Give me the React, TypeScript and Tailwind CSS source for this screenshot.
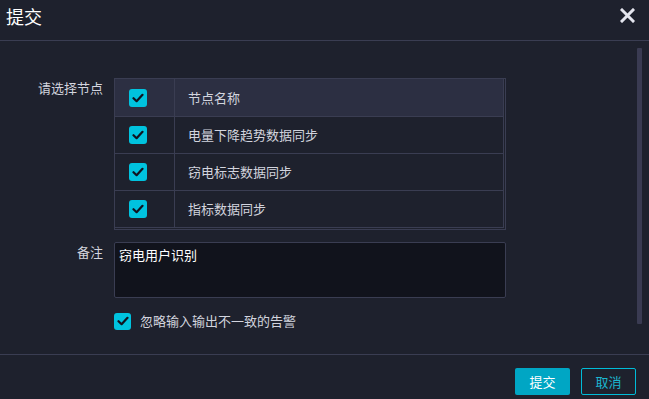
import React from "react";

const font = { fontFamily: '"Noto Sans CJK SC", "Noto Sans", sans-serif' };

function Check({ size = 18 }: { size?: number }) {
  return (
    <div
      className="flex items-center justify-center rounded-[3px] bg-[#00c3df]"
      style={{ width: size, height: size }}
    >
      <svg width="12" height="10" viewBox="0 0 12 10" fill="none">
        <path d="M1.5 5.2 L4.6 8.2 L10.5 1.8" stroke="#111320" strokeWidth="2.2" strokeLinecap="round" strokeLinejoin="round" />
      </svg>
    </div>
  );
}

const rows = ["电量下降趋势数据同步", "窃电标志数据同步", "指标数据同步"];

export default function App() {
  return (
    <div className="flex h-[399px] w-[649px] flex-col overflow-hidden bg-[#1e212d] text-[13px] text-[#d2d4de]" style={font}>
      <div className="flex h-[41px] items-start justify-between border-b border-[#3a3d52]">
        <div className="pl-[6px] pt-[4px] text-[18px] leading-[24px] text-white">提交</div>
        <svg className="mr-[14px] mt-[8px]" width="15" height="15" viewBox="0 0 15 15">
          <path d="M2 2 L13 13 M13 2 L2 13" stroke="#e4e5ee" strokeWidth="3" strokeLinecap="square" />
        </svg>
      </div>
      <div className="flex flex-1">
        <div className="flex flex-1 flex-col pt-[37px]">
          <div className="flex gap-[11px]">
            <div className="w-[103px] pt-[1px] text-right leading-[18px]">请选择节点</div>
            <div className="w-[392px] border border-[#3a3d52] pb-[1px] pr-[1px]">
              <div className="border-b border-r border-[#3a3d52]">
                <div className="flex h-[38px] border-b border-[#3a3d52] bg-[#2c2f42]">
                  <div className="flex w-[60px] items-center border-r border-[#3a3d52] pl-[14px]">
                    <Check />
                  </div>
                  <div className="flex items-center pl-[13px]">节点名称</div>
                </div>
                {rows.map((r, i) => (
                  <div
                    key={r}
                    className={i < rows.length - 1 ? "flex h-[37px] border-b border-[#3a3d52]" : "flex h-[36px]"}
                  >
                    <div className="flex w-[60px] items-center border-r border-[#3a3d52] pl-[14px]">
                      <Check />
                    </div>
                    <div className="flex items-center pl-[13px]">{r}</div>
                  </div>
                ))}
              </div>
            </div>
          </div>
          <div className="mt-[12px] flex gap-[11px]">
            <div className="w-[103px] pt-[1px] text-right leading-[18px]">备注</div>
            <div className="h-[56px] w-[392px] rounded-[2px] border border-[#3a3d52] bg-[#11131c] px-[4px] pt-[3px] leading-[18px] text-white">
              窃电用户识别
            </div>
          </div>
          <div className="mt-[14px] flex items-center gap-[9px] pl-[114px]">
            <Check size={17} />
            <span className="leading-[18px]">忽略输入输出不一致的告警</span>
          </div>
        </div>
        <div className="pr-[7px] pt-[7px]">
          <div className="h-[276px] w-[5px] rounded-[1px] bg-[#3a3b52]" />
        </div>
      </div>
      <div className="flex h-[45px] justify-end gap-[11px] border-t border-[#3a3d52] pr-[13px] pt-[13px]">
        <button className="h-[27px] w-[55px] rounded-[2px] bg-[#00a6c4] text-[13px] text-white">提交</button>
        <button className="h-[27px] w-[55px] rounded-[2px] border border-[#00bcd8] text-[13px] text-[#1cb6d0]">取消</button>
      </div>
    </div>
  );
}
